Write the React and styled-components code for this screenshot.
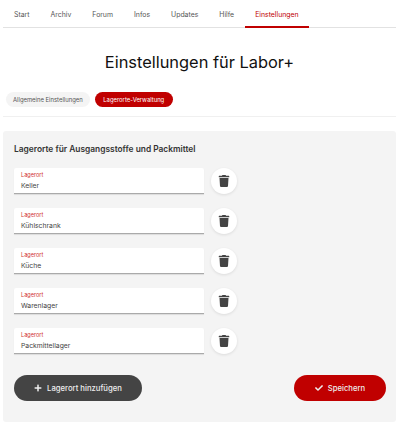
import React from 'react';
import styled, { createGlobalStyle } from 'styled-components';
import { FaTrash, FaPlus, FaCheck } from 'react-icons/fa';

const Global = createGlobalStyle`
  html, body {
    margin: 0;
    padding: 0;
    background: #fff;
    font-family: 'Inter', 'Noto Sans', sans-serif;
  }
`;

const Page = styled.div`
  width: 400px;
  height: 424px;
  padding: 0 4px 0 3px;
  box-sizing: border-box;
  overflow: hidden;
`;

const Nav = styled.nav`
  display: flex;
  gap: 1px;
  height: 28px;
  padding-left: 1px;
  border-bottom: 1px solid #e2e2e2;
  box-sizing: border-box;
`;

const Tab = styled.a`
  display: flex;
  align-items: center;
  height: 28px;
  padding: 2px 10px 0;
  box-sizing: border-box;
  font-size: 6.9px;
  color: ${(props) => (props.$active ? '#c00000' : '#555')};
  border-bottom: 2px solid ${(props) => (props.$active ? '#c00000' : 'transparent')};
`;

const Title = styled.h1`
  margin: 21px 0 0;
  height: 26px;
  line-height: 26px;
  text-align: center;
  font-size: 16.4px;
  font-weight: 400;
  color: #111;
`;

const Pills = styled.div`
  display: flex;
  gap: 5px;
  margin-top: 17px;
  padding: 0 0 9px 3px;
  border-bottom: 1px solid #f0f0f0;
`;

const Pill = styled.div`
  display: flex;
  align-items: center;
  height: 15px;
  padding: 0 ${(props) => (props.$active ? '8.5px' : '7px')};
  border-radius: 8px;
  font-size: 5.9px;
  color: ${(props) => (props.$active ? '#fff' : '#555')};
  background: ${(props) => (props.$active ? '#c00000' : '#f4f4f4')};
`;

const Panel = styled.section`
  margin-top: 14px;
  height: 291px;
  padding: 12px 10px 0 11px;
  box-sizing: border-box;
  background: #f4f4f4;
  border-radius: 3px;
`;

const Heading = styled.h2`
  margin: 0 0 13px;
  height: 12px;
  line-height: 12px;
  font-size: 8.4px;
  font-weight: 600;
  color: #333;
`;

const Rows = styled.div`
  display: flex;
  flex-direction: column;
  gap: 14px;
`;

const Row = styled.div`
  display: flex;
  align-items: center;
  gap: 7px;
`;

const Field = styled.div`
  width: 190px;
  height: 26px;
  padding: 3px 7px 0;
  box-sizing: border-box;
  background: #fff;
  border-bottom: 1px solid #aaa;
  border-radius: 2px 2px 0 0;
  box-shadow: 0 1px 1px rgba(0, 0, 0, 0.1);
`;

const FieldLabel = styled.div`
  height: 8px;
  line-height: 8px;
  font-size: 5.6px;
  color: #d03030;
`;

const FieldValue = styled.div`
  margin-top: 2px;
  line-height: 10px;
  font-size: 6.8px;
  color: #444;
`;

const RoundButton = styled.button`
  display: flex;
  align-items: center;
  justify-content: center;
  width: 26px;
  height: 26px;
  padding: 0;
  border: none;
  border-radius: 50%;
  background: #fff;
  color: #444;
  font-size: 12px;
  box-shadow: 0 1px 3px rgba(0, 0, 0, 0.1);
`;

const Actions = styled.div`
  display: flex;
  justify-content: space-between;
  margin-top: 21px;
`;

const ActionButton = styled.button`
  display: flex;
  align-items: center;
  justify-content: center;
  gap: 5px;
  width: ${(props) => props.$width}px;
  height: 26px;
  padding: 0;
  border: none;
  border-radius: 13px;
  font-family: inherit;
  font-size: 7.7px;
  font-weight: 500;
  color: #eee;
  background: ${(props) => props.$bg};
`;

const places = ['Keller', 'Kühlschrank', 'Küche', 'Warenlager', 'Packmittellager'];
const tabs = ['Start', 'Archiv', 'Forum', 'Infos', 'Updates', 'Hilfe', 'Einstellungen'];

const App = () => (
  <Page>
    <Global />
    <Nav>
      {tabs.map((t) => (
        <Tab key={t} $active={t === 'Einstellungen'}>{t}</Tab>
      ))}
    </Nav>
    <Title>Einstellungen für Labor+</Title>
    <Pills>
      <Pill>Allgemeine Einstellungen</Pill>
      <Pill $active>Lagerorte-Verwaltung</Pill>
    </Pills>
    <Panel>
      <Heading>Lagerorte für Ausgangsstoffe und Packmittel</Heading>
      <Rows>
        {places.map((p) => (
          <Row key={p}>
            <Field>
              <FieldLabel>Lagerort</FieldLabel>
              <FieldValue>{p}</FieldValue>
            </Field>
            <RoundButton><FaTrash /></RoundButton>
          </Row>
        ))}
      </Rows>
      <Actions>
        <ActionButton $width={128} $bg="#444"><FaPlus size={8} /> Lagerort hinzufügen</ActionButton>
        <ActionButton $width={92} $bg="#c00000"><FaCheck size={8} /> Speichern</ActionButton>
      </Actions>
    </Panel>
  </Page>
);

export default App;
